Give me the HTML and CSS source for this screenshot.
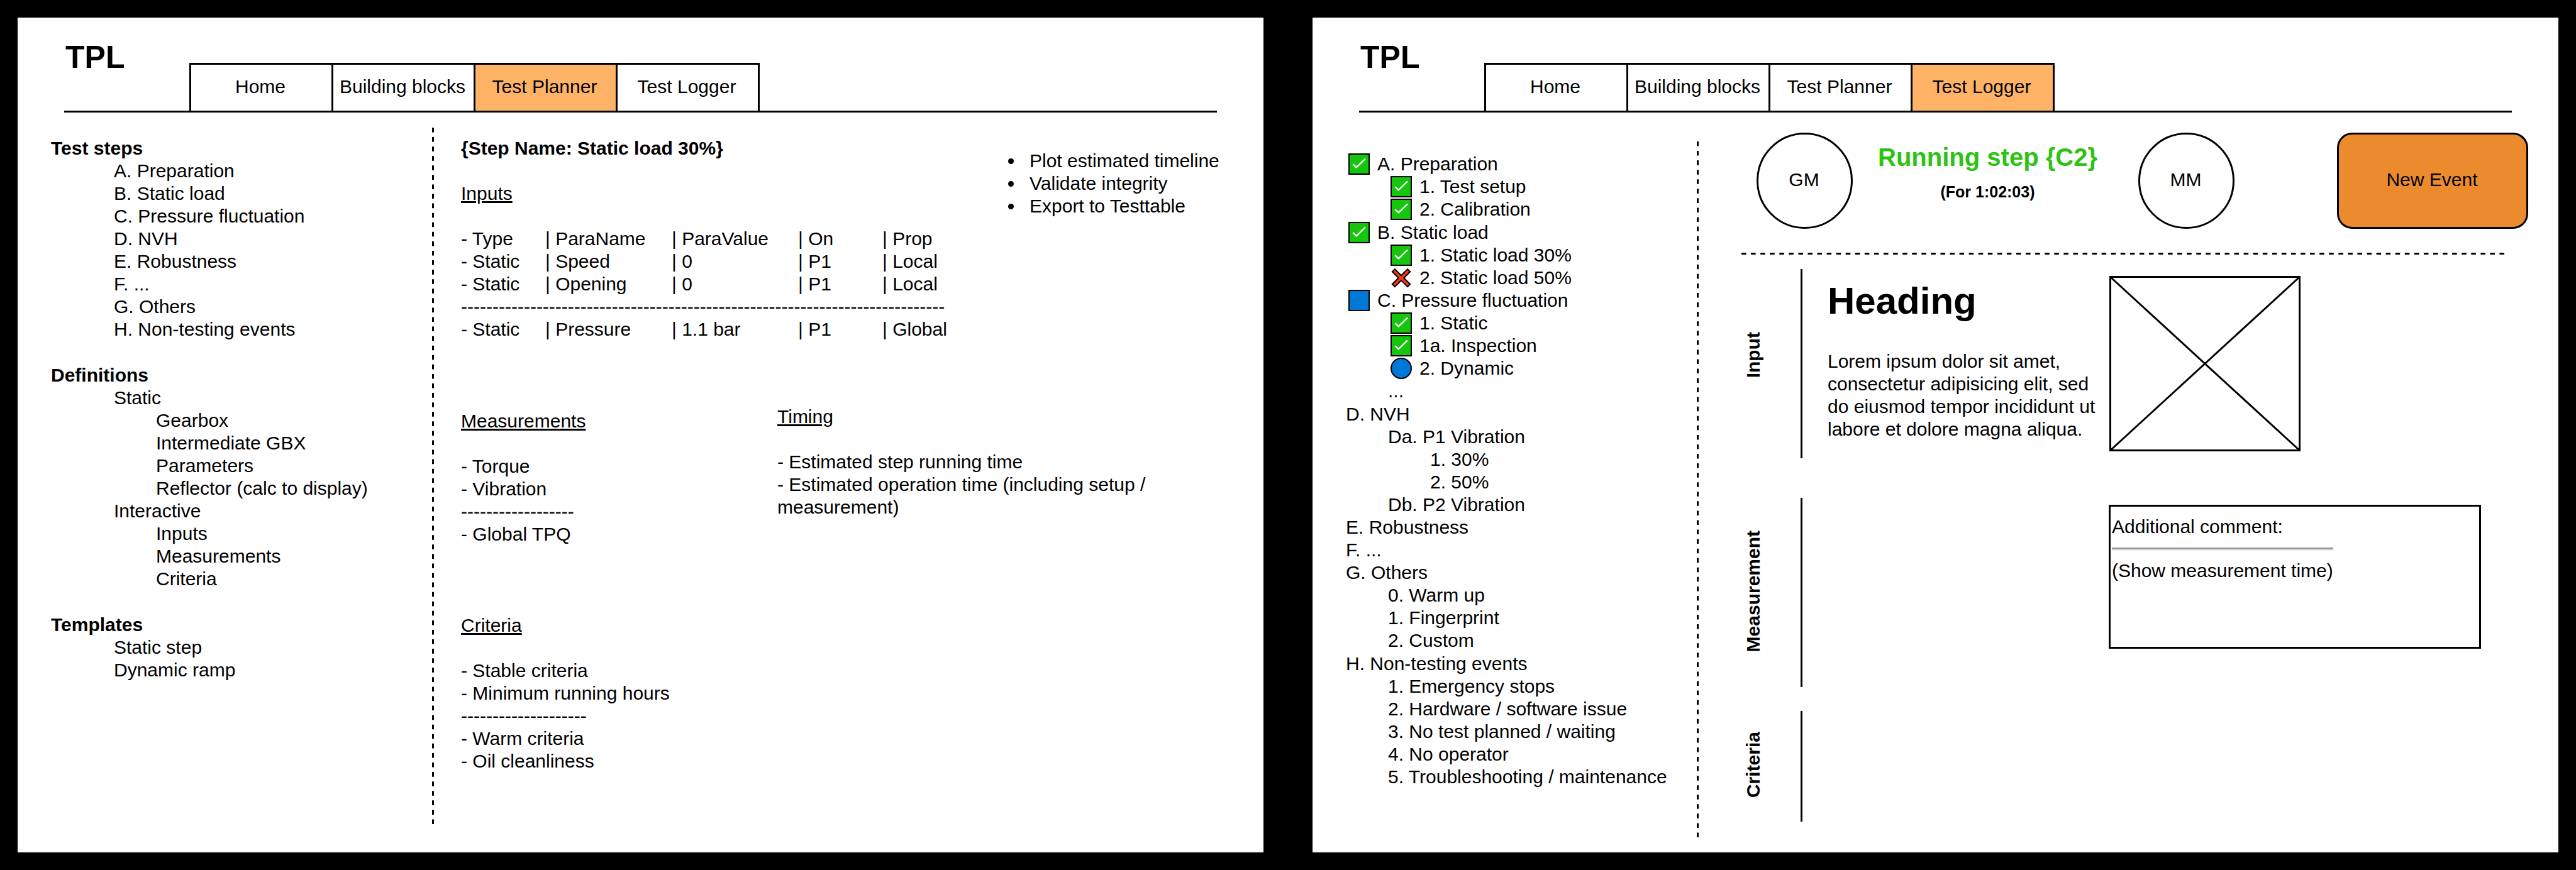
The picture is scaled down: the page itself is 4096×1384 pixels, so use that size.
FILE: index.html
```html
<!DOCTYPE html>
<html lang="en">
<head>
<meta charset="utf-8">
<meta name="viewport" content="width=device-width, initial-scale=1">
<title>TPL</title>
<link rel="stylesheet" href="styles.css">
</head>
<body>

<!-- Shared status symbols -->
<svg class="sprite" aria-hidden="true">
  <symbol id="done" viewBox="0 0 54 54">
    <rect x="1.6" y="1.6" width="50.8" height="50.8" fill="#16c60c" stroke="#000" stroke-width="3.2"/>
    <path d="M11.6 27.3 20.2 35.5 42.8 13.5" fill="none" stroke="#fff" stroke-width="3.8"/>
  </symbol>
  <symbol id="failed" viewBox="0 0 54 54">
    <path d="M11 5 27 21 43 5 49.5 11.5 33.7 27.3 49.5 43 43 49.5 27 33.5 11 49.5 4.5 43 20.3 27.3 4.5 11.5Z" fill="#f03a17" stroke="#000" stroke-width="3.2"/>
  </symbol>
  <symbol id="active-group" viewBox="0 0 54 54">
    <rect x="1.6" y="1.6" width="50.8" height="50.8" fill="#0078d7" stroke="#000" stroke-width="3.2"/>
  </symbol>
  <symbol id="active-step" viewBox="0 0 54 54">
    <circle cx="27" cy="27" r="25.4" fill="#0078d7" stroke="#000" stroke-width="3.2"/>
  </symbol>
</svg>

<main class="screens">

  <section class="panel">
    <header class="topbar">
      <h1 class="brand">TPL</h1>
      <nav class="tabs">
        <a class="tab" href="#home">Home</a>
        <a class="tab" href="#blocks">Building blocks</a>
        <a class="tab tab-active" href="#planner">Test Planner</a>
        <a class="tab" href="#logger">Test Logger</a>
      </nav>
    </header>

    <div class="workspace planner">
      <aside class="outline">
        <section>
          <h2 class="title">Test steps</h2>
          <ul class="entries">
            <li>A. Preparation</li>
            <li>B. Static load</li>
            <li>C. Pressure fluctuation</li>
            <li>D. NVH</li>
            <li>E. Robustness</li>
            <li>F. ...</li>
            <li>G. Others</li>
            <li>H. Non-testing events</li>
          </ul>
        </section>
        <section>
          <h2 class="title">Definitions</h2>
          <ul class="entries">
            <li>Static
              <ul class="nested">
                <li>Gearbox</li>
                <li>Intermediate GBX</li>
                <li>Parameters</li>
                <li>Reflector (calc to display)</li>
              </ul>
            </li>
            <li>Interactive
              <ul class="nested">
                <li>Inputs</li>
                <li>Measurements</li>
                <li>Criteria</li>
              </ul>
            </li>
          </ul>
        </section>
        <section>
          <h2 class="title">Templates</h2>
          <ul class="entries">
            <li>Static step</li>
            <li>Dynamic ramp</li>
          </ul>
        </section>
      </aside>

      <div class="divider"><svg class="dash" viewBox="0 0 1 441" preserveAspectRatio="none" aria-hidden="true"><path d="M.5 0V441" stroke="#000" stroke-width="1" stroke-dasharray="3 3"/></svg></div>

      <div class="detail">
        <div class="detail-top">
          <div class="step">
            <h2 class="title">{Step Name: Static load 30%}</h2>
            <section class="block">
              <h3 class="subtitle">Inputs</h3>
              <table class="params">
                <colgroup><col class="c-type"><col class="c-name"><col class="c-value"><col class="c-on"><col class="c-prop"></colgroup>
                <thead>
                  <tr><th>- Type</th><th>| ParaName</th><th>| ParaValue</th><th>| On</th><th>| Prop</th></tr>
                </thead>
                <tbody>
                  <tr><td>- Static</td><td>| Speed</td><td>| 0</td><td>| P1</td><td>| Local</td></tr>
                  <tr><td>- Static</td><td>| Opening</td><td>| 0</td><td>| P1</td><td>| Local</td></tr>
                  <tr><td colspan="5">-----------------------------------------------------------------------------</td></tr>
                  <tr><td>- Static</td><td>| Pressure</td><td>| 1.1 bar</td><td>| P1</td><td>| Global</td></tr>
                </tbody>
              </table>
            </section>
          </div>
          <ul class="actions">
            <li>Plot estimated timeline</li>
            <li>Validate integrity</li>
            <li>Export to Testtable</li>
          </ul>
        </div>

        <div class="detail-bottom">
          <div class="checks">
            <section>
              <h3 class="subtitle">Measurements</h3>
              <p>- Torque</p>
              <p>- Vibration</p>
              <p>------------------</p>
              <p>- Global TPQ</p>
            </section>
            <section>
              <h3 class="subtitle">Criteria</h3>
              <p>- Stable criteria</p>
              <p>- Minimum running hours</p>
              <p>--------------------</p>
              <p>- Warm criteria</p>
              <p>- Oil cleanliness</p>
            </section>
          </div>
          <section class="timing">
            <h3 class="subtitle">Timing</h3>
            <p>- Estimated step running time</p>
            <p>- Estimated operation time (including setup / measurement)</p>
          </section>
        </div>
      </div>
    </div>
  </section>

  <section class="panel">
    <header class="topbar">
      <h1 class="brand">TPL</h1>
      <nav class="tabs">
        <a class="tab" href="#home">Home</a>
        <a class="tab" href="#blocks">Building blocks</a>
        <a class="tab" href="#planner">Test Planner</a>
        <a class="tab tab-active" href="#logger">Test Logger</a>
      </nav>
    </header>

    <div class="workspace logger">
      <ul class="progress">
        <li class="branch">
          <div class="state"><svg class="mark"><use href="#done"/></svg>A. Preparation</div>
          <ul class="nested">
            <li class="state"><svg class="mark"><use href="#done"/></svg>1. Test setup</li>
            <li class="state"><svg class="mark"><use href="#done"/></svg>2. Calibration</li>
          </ul>
        </li>
        <li>
          <div class="state"><svg class="mark"><use href="#done"/></svg>B. Static load</div>
          <ul class="nested">
            <li class="state"><svg class="mark"><use href="#done"/></svg>1. Static load 30%</li>
            <li class="state"><svg class="mark"><use href="#failed"/></svg>2. Static load 50%</li>
          </ul>
        </li>
        <li class="branch">
          <div class="state"><svg class="mark"><use href="#active-group"/></svg>C. Pressure fluctuation</div>
          <ul class="nested">
            <li class="state"><svg class="mark"><use href="#done"/></svg>1. Static</li>
            <li class="state"><svg class="mark"><use href="#done"/></svg>1a. Inspection</li>
            <li class="state"><svg class="mark"><use href="#active-step"/></svg>2. Dynamic</li>
            <li>...</li>
          </ul>
        </li>
        <li>D. NVH
          <ul class="nested">
            <li>Da. P1 Vibration
              <ul class="nested">
                <li>1. 30%</li>
                <li>2. 50%</li>
              </ul>
            </li>
            <li>Db. P2 Vibration</li>
          </ul>
        </li>
        <li>E. Robustness</li>
        <li>F. ...</li>
        <li class="branch">G. Others
          <ul class="nested">
            <li>0. Warm up</li>
            <li>1. Fingerprint</li>
            <li>2. Custom</li>
          </ul>
        </li>
        <li>H. Non-testing events
          <ul class="nested">
            <li>1. Emergency stops</li>
            <li>2. Hardware / software issue</li>
            <li>3. No test planned / waiting</li>
            <li>4. No operator</li>
            <li>5. Troubleshooting / maintenance</li>
          </ul>
        </li>
      </ul>

      <div class="divider"><svg class="dash" viewBox="0 0 1 441" preserveAspectRatio="none" aria-hidden="true"><path d="M.5 0V441" stroke="#000" stroke-width="1" stroke-dasharray="3 3"/></svg></div>

      <div class="run">
        <div class="status">
          <button class="round" type="button">GM</button>
          <div class="running">
            <h2 class="running-step">Running step {C2}</h2>
            <p class="running-time">(For 1:02:03)</p>
          </div>
          <button class="round round-second" type="button">MM</button>
          <button class="new-event" type="button">New Event</button>
        </div>

        <div class="rule"><svg class="dash" viewBox="0 0 483 1" preserveAspectRatio="none" aria-hidden="true"><path d="M0 .5H483" stroke="#000" stroke-width="1" stroke-dasharray="3 3"/></svg></div>

        <section class="stage">
          <div class="stage-side stage-side-raised"><h3 class="stage-name">Input</h3></div>
          <div class="stage-body">
            <div class="copy">
              <h2 class="heading">Heading</h2>
              <p>Lorem ipsum dolor sit amet, consectetur adipisicing elit, sed do eiusmod tempor incididunt ut labore et dolore magna aliqua.</p>
            </div>
            <svg class="picture" viewBox="0 0 304 279" role="img" aria-label="Picture placeholder">
              <path d="M1.5 1.5H302.5V277.5H1.5ZM1.5 1.5 302.5 277.5M302.5 1.5 1.5 277.5" fill="none" stroke="#000" stroke-width="3"/>
            </svg>
          </div>
        </section>

        <section class="stage stage-measure">
          <div class="stage-side"><h3 class="stage-name">Measurement</h3></div>
          <div class="stage-body stage-body-end">
            <div class="comment">
              <div class="comment-text">
                <p>Additional comment:</p>
                <hr class="line">
                <p>(Show measurement time)</p>
              </div>
            </div>
          </div>
        </section>

        <section class="stage stage-short">
          <div class="stage-side"><h3 class="stage-name">Criteria</h3></div>
          <div class="stage-body"></div>
        </section>
      </div>
    </div>
  </section>

</main>
</body>
</html>
```
FILE: styles.css
```css
* {
  box-sizing: border-box;
}

body {
  margin: 0;
  background: #000;
  color: #000;
  font: 30px/36px "Liberation Sans", Arial, sans-serif;
}

h1, h2, h3, p, ul {
  margin: 0;
  padding: 0;
}

ul {
  list-style: none;
}

.sprite {
  position: absolute;
  width: 0;
  height: 0;
}

.screens {
  display: grid;
  grid-template-columns: 1fr 1fr;
  gap: 78px;
  min-height: 100vh;
  padding: 28px;
}

.panel {
  display: flex;
  flex-direction: column;
  background: #fff;
}

/* Top bar */

.topbar {
  display: flex;
  align-items: flex-end;
  margin: 0 74px;
  padding-top: 33px;
  border-bottom: 3px solid #000;
}

.brand {
  flex: 0 0 199px;
  padding: 0 0 55px 2px;
  font-size: 50px;
  line-height: 60px;
}

.tabs {
  display: flex;
  border-right: 3px solid #000;
}

.tab {
  display: flex;
  align-items: center;
  justify-content: center;
  width: 226px;
  height: 76px;
  padding: 0 3px 3px 0;
  border: solid #000;
  border-width: 3px 0 0 3px;
  color: #000;
  text-decoration: none;
  white-space: nowrap;
}

.tab-active {
  background: #ffb366;
}

/* Shared parts */

.workspace {
  display: grid;
  flex: 1;
}

.divider {
  position: relative;
}

.dash {
  position: absolute;
  inset: 0;
  width: 100%;
  height: 100%;
}

.title {
  font-size: 30px;
  line-height: 36px;
}

.subtitle {
  margin-bottom: 36px;
  font-size: 30px;
  font-weight: normal;
  line-height: 36px;
  text-decoration: underline;
}

.nested {
  padding-left: 67px;
}

/* Planner */

.planner {
  grid-template-columns: 659px 3px 1fr;
}

.planner .divider {
  margin: 24px 0 45px;
}

.outline {
  display: flex;
  flex-direction: column;
  gap: 37px;
  padding: 39px 0 0 53px;
}

.entries {
  padding-left: 100px;
}

.detail {
  display: flex;
  flex-direction: column;
  gap: 103px;
  padding: 39px 0 0 43px;
}

.detail-top {
  display: flex;
  justify-content: space-between;
}

.block {
  margin-top: 36px;
}

.params {
  table-layout: fixed;
  width: 803px;
  border-collapse: collapse;
}

.params th,
.params td {
  padding: 0;
  font-weight: normal;
  text-align: left;
  white-space: nowrap;
}

.c-type, .c-on {
  width: 134px;
}

.c-name, .c-value {
  width: 201px;
}

.actions {
  width: 381px;
  margin-top: 20px;
  list-style: disc;
}

.actions li {
  padding-left: 9px;
}

.detail-bottom {
  display: flex;
}

.checks {
  display: flex;
  flex: 0 0 503px;
  flex-direction: column;
  gap: 109px;
  padding-top: 7px;
}

.timing {
  width: 640px;
}

/* Logger */

.logger {
  grid-template-columns: 611px 3px 1fr;
}

.logger .divider {
  margin: 46px 0 24px;
}

.progress {
  padding: 64px 0 0 53px;
}

.branch {
  margin-bottom: 1px;
}

.state {
  display: flex;
  align-items: center;
  gap: 12px;
  padding-left: 4px;
}

.mark {
  width: 34px;
  height: 34px;
}

.run {
  padding-top: 32px;
}

.status {
  display: flex;
  padding: 0 48px 0 92px;
}

.round,
.new-event {
  height: 153px;
  padding: 0 2px 3px 0;
  border: 3px solid #000;
  background: #fff;
  color: #000;
  font: inherit;
}

.round {
  width: 153px;
  border-radius: 50%;
}

.round-second {
  margin-left: 28px;
}

.new-event {
  width: 304px;
  margin-left: auto;
  border-radius: 24px;
  background: #ec8b2e;
}

.running {
  flex: 0 0 426px;
  padding: 15px 0 0 3px;
  text-align: center;
}

.running-step {
  margin-bottom: 16px;
  color: #2dc313;
  font-size: 40px;
  line-height: 48px;
}

.running-time {
  font-size: 25px;
  font-weight: bold;
  line-height: 30px;
}

.rule {
  position: relative;
  height: 3px;
  margin: 38px 86px 23px 68px;
}

.stage {
  display: grid;
  grid-template-columns: 93px 1fr;
  min-height: 301px;
  padding-left: 69px;
}

.stage-measure {
  margin: 63px 0 38px;
}

.stage-short {
  min-height: 176px;
}

.stage-side {
  display: flex;
  align-items: center;
  padding-bottom: 4px;
}

.stage-side-raised {
  padding-bottom: 28px;
}

.stage-name {
  font-size: 30px;
  line-height: 36px;
  writing-mode: vertical-rl;
  transform: rotate(180deg);
}

.stage-body {
  display: flex;
  gap: 8px;
  padding: 11px 0 0 40px;
  border-left: 3px solid #000;
}

.stage-body-end {
  justify-content: flex-end;
  padding-right: 123px;
}

.copy {
  width: 440px;
  padding-top: 4px;
}

.heading {
  margin-bottom: 42px;
  font-size: 60px;
  line-height: 72px;
}

.picture {
  width: 304px;
  height: 279px;
}

.comment {
  width: 592px;
  height: 229px;
  padding: 14px 2px 0;
  border: 3px solid #000;
}

.comment-text {
  width: max-content;
}

.line {
  margin: 15px 0 14px;
  border: solid;
  border-width: 3px 0 2px;
  border-color: #9a9a9a #eee #eee;
}
```
